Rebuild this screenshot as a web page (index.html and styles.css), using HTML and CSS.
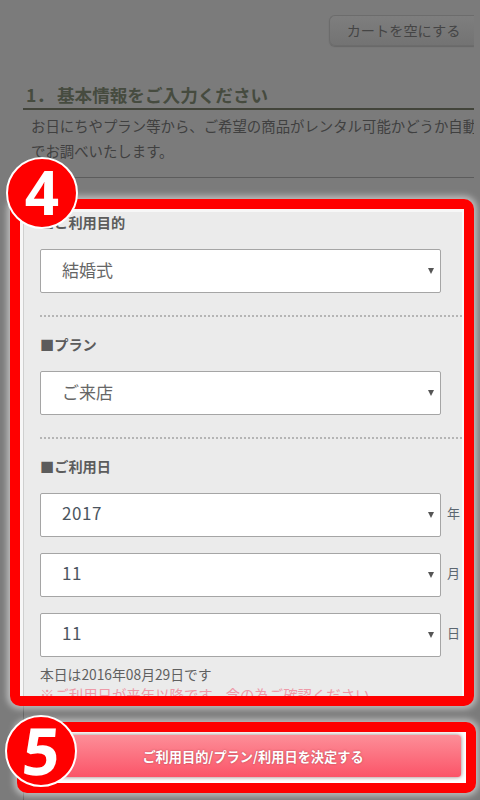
FILE: index.html
```html
<!DOCTYPE html>
<html lang="ja">
<head>
<meta charset="utf-8">
<title>基本情報</title>
<link rel="stylesheet" href="styles.css">
</head>
<body>
<div class="page">
  <div class="top">
    <div class="cart-row"><button class="cart-btn" type="button">カートを空にする</button></div>
    <h2 class="heading"><span class="heading-no">1．</span>基本情報をご入力ください</h2>
    <p class="lead">お日にちやプラン等から、ご希望の商品がレンタル可能かどうか自動<br>でお調べいたします。</p>
    <div class="rule"></div>
  </div>

  <section class="box-form">
    <div class="form">
      <div class="form-title">■ご利用目的</div>
      <div class="row"><div class="sel">結婚式</div></div>
      <div class="dots"></div>
      <div class="form-title">■プラン</div>
      <div class="row"><div class="sel">ご来店</div></div>
      <div class="dots"></div>
      <div class="form-title">■ご利用日</div>
      <div class="row"><div class="sel num">2017</div><span class="unit">年</span></div>
      <div class="row next"><div class="sel num">11</div><span class="unit">月</span></div>
      <div class="row next"><div class="sel num">11</div><span class="unit">日</span></div>
      <p class="today">本日は2016年08月29日です</p>
      <p class="warn">※ご利用日が来年以降です。念の為ご確認ください</p>
    </div>
  </section>

  <section class="box-submit">
    <div class="submit-wrap"><button class="submit" type="button">ご利用目的/プラン/利用日を決定する</button></div>
  </section>

  <div class="badge badge-4">4</div>
  <div class="badge badge-5"><span class="slant">5</span></div>
</div>
</body>
</html>
```

FILE: styles.css
```css
* { box-sizing: border-box; }
html, body { margin: 0; height: 100%; }
body {
  background: #7b7b7b;
  font-family: "Noto Sans CJK JP", "Noto Sans", sans-serif;
  overflow: hidden;
}
.page {
  position: relative;
  width: 480px;
  height: 800px;
  overflow: hidden;
  display: flex;
  flex-direction: column;
}
.page::before {
  content: "";
  position: absolute;
  left: 23px;
  top: 178px;
  bottom: 0;
  width: 1px;
  background: #5f5f5f;
}
.top {
  width: 474px;
  height: 199px;
  padding-top: 15px;
  overflow: hidden;
  flex: none;
}
.cart-row { display: flex; justify-content: flex-end; }
.cart-btn {
  width: 145px;
  height: 31px;
  border: 1px solid #6c6c6c;
  border-right: 0;
  border-radius: 6px 0 0 6px;
  background: linear-gradient(#7e7e7e, #737373);
  box-shadow: 0 1px 1px #686868;
  color: #454545;
  font: 400 14.2px/1 "Noto Sans CJK JP", sans-serif;
  padding: 0 0 0 3px;
  white-space: nowrap;
}
.heading {
  margin: 37px 0 0 23px;
  padding: 0 0 2px 3px;
  border-bottom: 2px solid #42443a;
  height: 27px;
  color: #464b3f;
  font-size: 17.6px;
  font-weight: 700;
  line-height: 24px;
  white-space: nowrap;
}
.heading-no { margin-right: 3px; }
.lead {
  margin: 3px 0 0 31px;
  color: #404040;
  font-size: 14.4px;
  line-height: 25px;
  white-space: nowrap;
}
.rule {
  height: 1px;
  margin: 14px 0 0 24px;
  background: #5c5c5c;
}
.box-form {
  position: relative;
  flex: none;
  width: 464px;
  height: 507px;
  margin-left: 10px;
  border: 10px solid #f00;
  border-radius: 10px;
  background: #ebebeb;
  box-shadow: 0 0 6px 3px rgba(255, 255, 255, .5);
  overflow: hidden;
}
.form {
  height: 487px;
  overflow: hidden;
  border-style: solid;
  border-color: #f7f7f7;
  border-width: 3px 2px 0 3px;
  background: linear-gradient(#cfcfcf, #cfcfcf) left top / 1px 100% no-repeat;
  padding: 0 0 0 17px;
  color: #555;
}
.form-title {
  color: #5c5c5c;
  font-size: 14.2px;
  font-weight: 700;
  line-height: 20px;
}
.row {
  display: flex;
  align-items: center;
  margin-top: 17px;
}
.row.next { margin-top: 16px; }
.sel {
  position: relative;
  width: 401px;
  height: 44px;
  padding-left: 21px;
  border: 1px solid #a5a5a5;
  border-radius: 2px;
  background: #fff;
  color: #666;
  font-size: 17px;
  line-height: 39px;
}
.sel::after {
  content: "";
  position: absolute;
  right: 6px;
  top: 18px;
  border-style: solid;
  border-width: 6px 3px 0;
  border-color: #555 transparent transparent;
}
.num { color: #4b5560; letter-spacing: .6px; line-height: 38px; }
.unit {
  margin: 0 0 5px 6px;
  color: #5b6670;
  font-size: 13px;
}
.dots {
  height: 0;
  margin: 22px 0 17px;
  border-top: 2px dotted #b5b5b5;
}
.today {
  margin: 7px 0 0;
  color: #606060;
  font-size: 13.8px;
  line-height: 20px;
  white-space: nowrap;
}
.warn {
  margin: 1px 0 0;
  color: #ee9aa8;
  font-size: 14.4px;
  line-height: 20px;
  white-space: nowrap;
}
.box-submit {
  position: relative;
  flex: none;
  width: 459px;
  height: 71px;
  margin: 16px 0 0 17px;
  border: 10px solid #f00;
  border-radius: 10px;
  background: #fff;
  box-shadow: 0 0 6px 3px rgba(255, 255, 255, .5);
}
.submit-wrap { padding: 3px 5px 5px 0; height: 51px; }
.submit {
  display: block;
  width: 100%;
  height: 42px;
  border: 0;
  border-radius: 3px;
  background: linear-gradient(#fd8e98, #fb5468);
  box-shadow: 0 0 4px rgba(110, 60, 60, .7);
  color: #fff;
  font: 700 13.2px/1 "Noto Sans CJK JP", sans-serif;
  padding: 1px 0 0 18px;
  text-shadow: 0 0 2px rgba(120, 40, 50, .6);
}
.badge {
  position: absolute;
  width: 72px;
  height: 72px;
  border: 2px solid #fff;
  border-radius: 50%;
  background: #f00;
  color: #fff;
  font-family: "Open Sans", "Noto Sans", sans-serif;
  font-weight: 700;
  text-align: center;
}
.badge-4 { left: 6px; top: 157px; font-size: 60px; line-height: 66px; }
.badge-5 { left: 5px; top: 715px; font-size: 65px; line-height: 66px; padding-left: 2px; }
.slant { display: inline-block; transform: skewX(-5deg); }
```
